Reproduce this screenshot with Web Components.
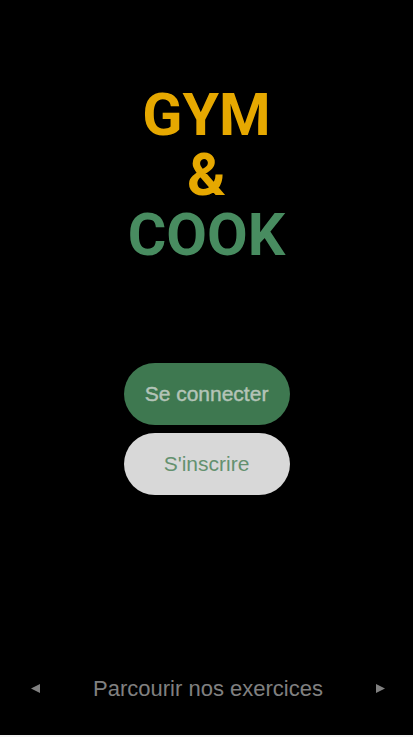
<!DOCTYPE html>
<html lang="fr">
<head>
<meta charset="utf-8">
<meta name="viewport" content="width=device-width, initial-scale=1">
<title>Gym &amp; Cook</title>
<style>
  body { margin: 0; background: #f4f4f4; font-family: "Liberation Sans", sans-serif; }
</style>
</head>
<body>
<gym-home></gym-home>
<script>
  class BrandTitle extends HTMLElement {
    constructor() {
      super();
      this.attachShadow({ mode: "open" }).innerHTML = `
        <style>
          :host { display: block; }
          h1 { margin: 0; font: 700 59px/60px "Roboto", sans-serif; text-align: center; color: #e6a800; }
          span { display: block; }
          .cook { color: #488c60; }
        </style>
        <h1><span>GYM</span><span>&amp;</span><span class="cook">COOK</span></h1>`;
    }
  }
  customElements.define("brand-title", BrandTitle);

  class PillButton extends HTMLElement {
    constructor() {
      super();
      this.attachShadow({ mode: "open" }).innerHTML = `
        <style>
          :host { display: block; }
          button { width: 100%; height: 62px; padding: 0; border: 0; border-radius: 31px; cursor: pointer;
            font: 400 21px/24px "Liberation Sans", sans-serif; background: #d8d8d8; color: #64916f; }
          :host([primary]) button { background: #3e7850; color: #b4c4b8; -webkit-text-stroke: 1px currentColor; -webkit-text-stroke-width: thin; }
        </style>
        <button type="button"><slot></slot></button>`;
    }
  }
  customElements.define("pill-button", PillButton);

  class ArrowButton extends HTMLElement {
    connectedCallback() {
      const next = this.getAttribute("direction") === "next";
      const root = this.shadowRoot || this.attachShadow({ mode: "open" });
      root.innerHTML = `
        <style>
          :host { display: block; }
          button { display: block; padding: 8px 0; border: 0; background: none; color: #808080; cursor: pointer; }
          svg { display: block; fill: currentColor; }
        </style>
        <button type="button" aria-label="${next ? "Suivant" : "Précédent"}">
          <svg width="9" height="9" viewBox="0 0 9 9" aria-hidden="true"><path d="${next ? "M0 0 9 4.5 0 9Z" : "M9 0 0 4.5 9 9Z"}"/></svg>
        </button>`;
    }
  }
  customElements.define("arrow-button", ArrowButton);

  class GymHome extends HTMLElement {
    constructor() {
      super();
      this.attachShadow({ mode: "open" }).innerHTML = `
        <style>
          :host { display: flex; flex-direction: column; box-sizing: border-box;
            min-height: calc(100vh - 2px); padding: 85px 0 34px; background: #000; }
          main { display: flex; flex-direction: column; align-items: center; }
          .actions { display: grid; gap: 8px; width: 166px; margin-top: 98px; }
          nav { display: flex; justify-content: space-between; align-items: center; margin-top: auto; padding: 0 28px 0 31px; }
          a { color: #808080; font-size: 22px; line-height: 24px; text-decoration: none; }
        </style>
        <main>
          <brand-title></brand-title>
          <div class="actions">
            <pill-button primary>Se connecter</pill-button>
            <pill-button>S'inscrire</pill-button>
          </div>
        </main>
        <nav>
          <arrow-button direction="previous"></arrow-button>
          <a href="#exercices">Parcourir nos exercices</a>
          <arrow-button direction="next"></arrow-button>
        </nav>`;
    }
  }
  customElements.define("gym-home", GymHome);
</script>
</body>
</html>
